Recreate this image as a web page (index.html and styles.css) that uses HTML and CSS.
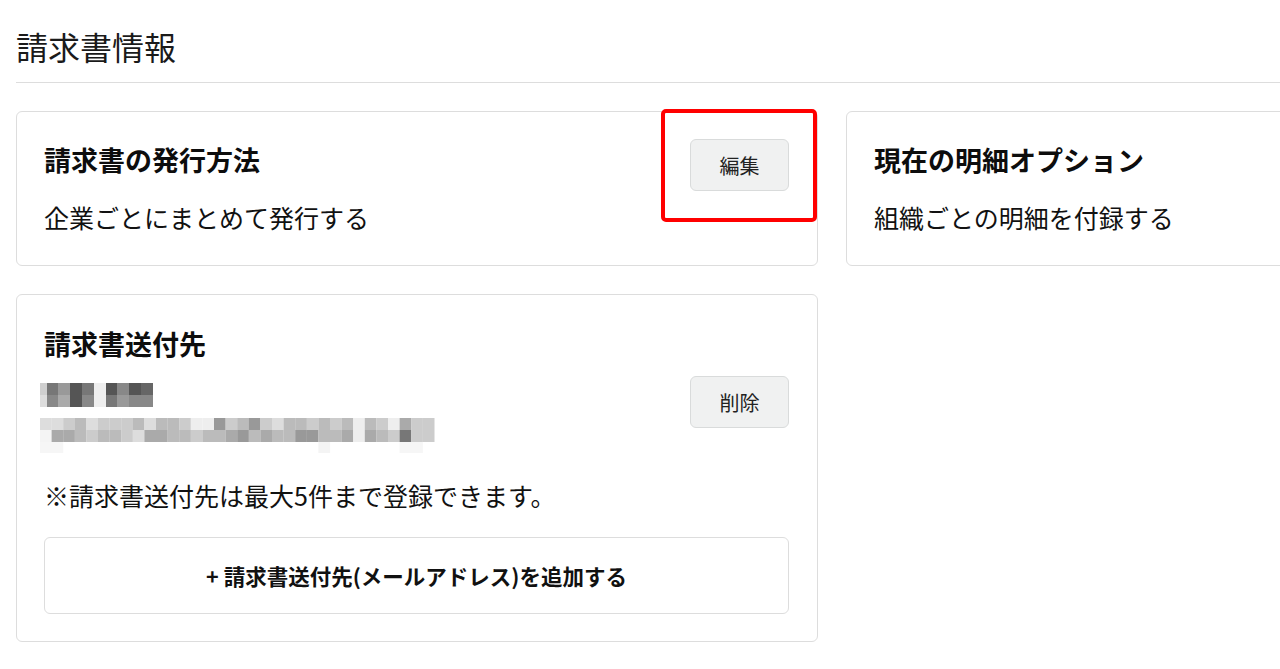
FILE: index.html
```html
<!DOCTYPE html>
<html lang="ja">
<head>
<meta charset="utf-8">
<title>請求書情報</title>
<link rel="stylesheet" href="styles.css">
</head>
<body>
<main class="page">
  <h1 class="page-title">請求書情報</h1>
  <div class="cards">
    <section class="card card-summary">
      <div class="card-row">
        <div class="card-text">
          <h2 class="card-title">請求書の発行方法</h2>
          <p class="card-body">企業ごとにまとめて発行する</p>
        </div>
        <button class="btn">編集</button>
      </div>
      <div class="highlight"></div>
    </section>
    <section class="card card-summary">
      <div class="card-text">
        <h2 class="card-title">現在の明細オプション</h2>
        <p class="card-body">組織ごとの明細を付録する</p>
      </div>
    </section>
    <section class="card card-dest">
      <h2 class="card-title">請求書送付先</h2>
      <div class="dest-row">
        <svg class="masked" width="396" height="72" viewBox="0 0 396 72" aria-hidden="true">
          <g>
            <rect x="0" y="0" width="7" height="12" fill="#cfcfcf"/>
            <rect x="7" y="0" width="11" height="12" fill="#777"/>
            <rect x="18" y="0" width="12" height="12" fill="#999"/>
            <rect x="30" y="0" width="12" height="12" fill="#555"/>
            <rect x="42" y="0" width="12" height="12" fill="#777"/>
            <rect x="54" y="0" width="12" height="12" fill="#eee"/>
            <rect x="66" y="0" width="11" height="12" fill="#555"/>
            <rect x="77" y="0" width="12" height="12" fill="#888"/>
            <rect x="89" y="0" width="12" height="12" fill="#555"/>
            <rect x="101" y="0" width="12" height="12" fill="#666"/>
            <rect x="0" y="12" width="7" height="12" fill="#ddd"/>
            <rect x="7" y="12" width="11" height="12" fill="#888"/>
            <rect x="18" y="12" width="12" height="12" fill="#aaa"/>
            <rect x="30" y="12" width="12" height="12" fill="#555"/>
            <rect x="42" y="12" width="12" height="12" fill="#888"/>
            <rect x="54" y="12" width="12" height="12" fill="#eee"/>
            <rect x="66" y="12" width="11" height="12" fill="#777"/>
            <rect x="77" y="12" width="12" height="12" fill="#999"/>
            <rect x="89" y="12" width="12" height="12" fill="#888"/>
            <rect x="101" y="12" width="12" height="12" fill="#888"/>
          </g>
          <g>
            <rect x="0" y="35" width="11.7" height="12" fill="#ddd"/>
            <rect x="11.6" y="35" width="11.7" height="12" fill="#ddd"/>
            <rect x="23.2" y="35" width="11.7" height="12" fill="#ccc"/>
            <rect x="34.8" y="35" width="11.7" height="12" fill="#bbb"/>
            <rect x="46.4" y="35" width="11.7" height="12" fill="#ddd"/>
            <rect x="58" y="35" width="11.7" height="12" fill="#ccc"/>
            <rect x="69.6" y="35" width="11.7" height="12" fill="#ccc"/>
            <rect x="81.2" y="35" width="11.7" height="12" fill="#ccc"/>
            <rect x="92.8" y="35" width="11.7" height="12" fill="#bbb"/>
            <rect x="104.4" y="35" width="11.7" height="12" fill="#ddd"/>
            <rect x="116" y="35" width="11.7" height="12" fill="#bbb"/>
            <rect x="127.6" y="35" width="11.7" height="12" fill="#bbb"/>
            <rect x="139.2" y="35" width="11.7" height="12" fill="#ccc"/>
            <rect x="150.8" y="35" width="11.7" height="12" fill="#eee"/>
            <rect x="162.4" y="35" width="11.7" height="12" fill="#eee"/>
            <rect x="174" y="35" width="11.7" height="12" fill="#999"/>
            <rect x="185.6" y="35" width="11.7" height="12" fill="#ccc"/>
            <rect x="197.2" y="35" width="11.7" height="12" fill="#bbb"/>
            <rect x="208.8" y="35" width="11.7" height="12" fill="#999"/>
            <rect x="220.4" y="35" width="11.7" height="12" fill="#ccc"/>
            <rect x="232" y="35" width="11.7" height="12" fill="#ddd"/>
            <rect x="243.6" y="35" width="11.7" height="12" fill="#bbb"/>
            <rect x="255.2" y="35" width="11.7" height="12" fill="#bbb"/>
            <rect x="266.8" y="35" width="11.7" height="12" fill="#ccc"/>
            <rect x="278.4" y="35" width="11.7" height="12" fill="#bbb"/>
            <rect x="290" y="35" width="11.7" height="12" fill="#ccc"/>
            <rect x="301.6" y="35" width="11.7" height="12" fill="#bbb"/>
            <rect x="313.2" y="35" width="11.7" height="12" fill="#eee"/>
            <rect x="324.8" y="35" width="11.7" height="12" fill="#bbb"/>
            <rect x="336.4" y="35" width="11.7" height="12" fill="#ccc"/>
            <rect x="348" y="35" width="11.7" height="12" fill="#eee"/>
            <rect x="359.6" y="35" width="11.7" height="12" fill="#aaa"/>
            <rect x="371.2" y="35" width="11.7" height="12" fill="#ccc"/>
            <rect x="382.8" y="35" width="11.7" height="12" fill="#ccc"/>
            <rect x="0" y="47" width="11.7" height="12" fill="#f4f4f4"/>
            <rect x="11.6" y="47" width="11.7" height="12" fill="#aaa"/>
            <rect x="23.2" y="47" width="11.7" height="12" fill="#aaa"/>
            <rect x="34.8" y="47" width="11.7" height="12" fill="#bbb"/>
            <rect x="46.4" y="47" width="11.7" height="12" fill="#ccc"/>
            <rect x="58" y="47" width="11.7" height="12" fill="#bbb"/>
            <rect x="69.6" y="47" width="11.7" height="12" fill="#bbb"/>
            <rect x="81.2" y="47" width="11.7" height="12" fill="#ccc"/>
            <rect x="92.8" y="47" width="11.7" height="12" fill="#ddd"/>
            <rect x="104.4" y="47" width="11.7" height="12" fill="#aaa"/>
            <rect x="116" y="47" width="11.7" height="12" fill="#aaa"/>
            <rect x="127.6" y="47" width="11.7" height="12" fill="#bbb"/>
            <rect x="139.2" y="47" width="11.7" height="12" fill="#bbb"/>
            <rect x="150.8" y="47" width="11.7" height="12" fill="#ccc"/>
            <rect x="162.4" y="47" width="11.7" height="12" fill="#bbb"/>
            <rect x="174" y="47" width="11.7" height="12" fill="#bbb"/>
            <rect x="185.6" y="47" width="11.7" height="12" fill="#aaa"/>
            <rect x="197.2" y="47" width="11.7" height="12" fill="#999"/>
            <rect x="208.8" y="47" width="11.7" height="12" fill="#bbb"/>
            <rect x="220.4" y="47" width="11.7" height="12" fill="#aaa"/>
            <rect x="232" y="47" width="11.7" height="12" fill="#bbb"/>
            <rect x="243.6" y="47" width="11.7" height="12" fill="#bbb"/>
            <rect x="255.2" y="47" width="11.7" height="12" fill="#999"/>
            <rect x="266.8" y="47" width="11.7" height="12" fill="#999"/>
            <rect x="278.4" y="47" width="11.7" height="12" fill="#bbb"/>
            <rect x="290" y="47" width="11.7" height="12" fill="#bbb"/>
            <rect x="301.6" y="47" width="11.7" height="12" fill="#aaa"/>
            <rect x="313.2" y="47" width="11.7" height="12" fill="#eee"/>
            <rect x="324.8" y="47" width="11.7" height="12" fill="#aaa"/>
            <rect x="336.4" y="47" width="11.7" height="12" fill="#bbb"/>
            <rect x="348" y="47" width="11.7" height="12" fill="#ccc"/>
            <rect x="359.6" y="47" width="11.7" height="12" fill="#777"/>
            <rect x="371.2" y="47" width="11.7" height="12" fill="#ccc"/>
            <rect x="382.8" y="47" width="11.7" height="12" fill="#ccc"/>
            <rect x="0" y="59" width="23.2" height="11" fill="#f6f6f6"/>
            <rect x="278.4" y="59" width="11.7" height="11" fill="#f4f4f4"/>
            <rect x="359.6" y="59" width="23.2" height="11" fill="#f6f6f6"/>
          </g>
        </svg>
        <button class="btn">削除</button>
      </div>
      <p class="note">※請求書送付先は最大5件まで登録できます。</p>
      <button class="add-btn">+ 請求書送付先(メールアドレス)を追加する</button>
    </section>
  </div>
</main>
</body>
</html>
```

FILE: styles.css
```css
* {
  box-sizing: border-box;
  margin: 0;
  padding: 0;
}

html,
body {
  overflow: hidden;
}

body {
  width: 1280px;
  height: 669px;
  background: #ffffff;
  color: #111111;
  font-family: "Noto Sans CJK JP", "Noto Sans", sans-serif;
}

.page {
  width: 1700px;
  padding-left: 16px;
}

.page-title {
  font-size: 32px;
  font-weight: 400;
  line-height: 40px;
  color: #1a1a1a;
  padding: 26px 0 16px 0;
  border-bottom: 1px solid #dddddd;
}

.cards {
  display: grid;
  grid-template-columns: 802px 802px;
  column-gap: 28px;
  row-gap: 28px;
  margin-top: 28px;
  align-items: start;
}

.card {
  position: relative;
  background: #ffffff;
  border: 1px solid #dddddd;
  border-radius: 6px;
}

.card-summary {
  height: 155px;
  padding: 27px 28px 30px 27px;
}

.card-row {
  display: flex;
  justify-content: space-between;
  align-items: flex-start;
}

.card-text {
  padding-top: 3px;
}

.card-title {
  font-size: 27px;
  font-weight: 700;
  line-height: 36px;
  color: #0d0d0d;
}

.card-body {
  font-size: 25px;
  line-height: 36px;
  margin-top: 21px;
  color: #111111;
}

.btn {
  width: 99px;
  height: 52px;
  flex: none;
  background: #f0f1f1;
  border: 1px solid #d9dbdb;
  border-radius: 6px;
  font-family: "Noto Sans CJK JP", "Noto Sans", sans-serif;
  font-size: 20px;
  color: #222222;
}

.highlight {
  position: absolute;
  left: 644px;
  top: -3px;
  width: 156px;
  height: 113px;
  border: 4px solid #ff0000;
  border-radius: 5px;
}

.card-dest {
  grid-column: 1;
  padding: 27px 28px 27px 27px;
}

.card-dest .card-title {
  margin-top: 4px;
}

.dest-row {
  display: flex;
  justify-content: space-between;
  align-items: flex-start;
  margin-top: 14px;
}

.masked {
  display: block;
  margin: 7px 0 0 -4px;
}

.note {
  font-size: 25px;
  line-height: 36px;
  margin-top: 22px;
  color: #111111;
}

.add-btn {
  display: block;
  width: 100%;
  height: 77px;
  margin-top: 24px;
  background: #ffffff;
  border: 1px solid #dddddd;
  border-radius: 6px;
  font-family: "Noto Sans CJK JP", "Noto Sans", sans-serif;
  font-size: 21.5px;
  font-weight: 700;
  color: #111111;
}
```
